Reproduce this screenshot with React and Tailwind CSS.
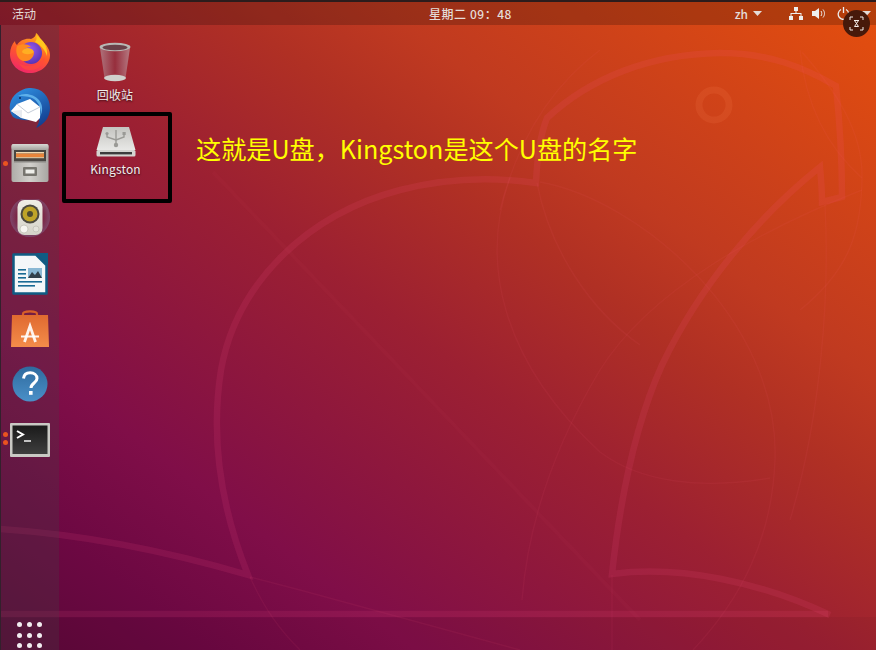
import React from 'react';

const dockSans = '"Noto Sans CJK SC", "Liberation Sans", sans-serif';

function Wallpaper() {
  return (
    <svg className="absolute inset-0 h-full w-full" viewBox="0 0 876 650" fill="none">
      <rect x="0" y="617" width="876" height="33" fill="#000" fillOpacity="0.04" />
      <path d="M213 172 L 640 620" stroke="#ff5088" strokeOpacity="0.03" strokeWidth="4" />
      <g stroke="#ff6a80" strokeOpacity="0.07" strokeWidth="1.4">
        <path d="M510 178 C 480 260 500 360 600 452 C 640 482 700 490 770 478" />
        <path d="M537 183 C 550 250 590 310 640 345" />
        <path d="M540 182 C 640 200 780 320 775 460 C 772 540 740 600 693 650" />
        <path d="M862 190 C 760 230 650 290 600 370 C 570 420 530 500 522 600" />
        <path d="M802 52 C 835 90 862 130 862 175 C 862 230 850 270 800 310" />
        <path d="M800 50 C 805 100 825 145 862 178" />
        <path d="M600 50 C 560 80 520 130 500 210" />
        <path d="M612 575 V 650" />
        <path d="M250 577 C 265 610 280 630 300 650" />
        <path d="M250 577 L 300 590 L 520 650" />
        <path d="M825 205 C 830 300 820 420 790 520" />
      </g>
      <g stroke="#ff5088" strokeOpacity="0.12" strokeWidth="6.5" strokeLinejoin="miter">
        <path d="M0 529 C 90 535 170 552 248 575 C 222 510 210 440 221 370 C 236 285 305 215 400 190 C 450 177 495 177 536 183 C 537 160 540 135 547 118 C 590 78 650 54 720 53 C 770 53 805 68 836 86 C 840 125 842 165 842 197 L 822 202 C 822 190 821 178 820 167 C 760 215 700 285 662 365 C 635 425 620 500 612 574 C 680 565 760 582 830 615" />
        <path d="M0 614 L 828 614" />
      </g>
      <circle cx="714" cy="105" r="15" stroke="#ff8a5a" strokeOpacity="0.13" strokeWidth="7" />
    </svg>
  );
}

function Firefox() {
  return (
    <svg width="42" height="42" viewBox="0 0 42 42">
      <defs>
        <linearGradient id="ffBody" x1="0.7" y1="0" x2="0.3" y2="1">
          <stop offset="0" stopColor="#ffb21a" />
          <stop offset="0.5" stopColor="#ff5a2a" />
          <stop offset="1" stopColor="#f0256a" />
        </linearGradient>
        <radialGradient id="ffGlobe" cx="0.45" cy="0.35" r="0.8">
          <stop offset="0" stopColor="#9a5cf0" />
          <stop offset="1" stopColor="#4a2aa8" />
        </radialGradient>
      </defs>
      <path d="M27 1 C 31 4 31 7 33 9 C 38 13 41 18 41 23 C 41 33 32 41 21 41 C 10 41 1 33 1 22 C 1 17 3 12 6 9 C 6 11 7 12 8 13 C 11 8 17 6 22 7 C 25 6 27 4 27 1 Z" fill="url(#ffBody)" />
      <circle cx="22" cy="21" r="11" fill="url(#ffGlobe)" />
      <path d="M8 14 C 13 11 20 12 22 15 C 18 15 15 17 15 19 C 17 22 22 21 25 20 C 25 26 20 30 14 29 C 8 27 6 20 8 14 Z" fill="#ff8a1e" />
      <path d="M27 3 C 35 8 39 15 38 24 C 36 18 32 13 26 10 C 28 8 28 5 27 3 Z" fill="#ffc81e" />
      <path d="M10 31 C 18 37 30 34 36 25 C 35 33 28 39 20 38 C 15 38 12 35 10 31 Z" fill="#ff4a3a" fillOpacity="0.7" />
      <path d="M13 20 C 15 23 22 23 25 20 C 24 17 21 16 18 16 C 15 17 13 18 13 20 Z" fill="#ffae22" />
    </svg>
  );
}

function Thunderbird() {
  return (
    <svg width="42" height="42" viewBox="0 0 42 42">
      <defs>
        <linearGradient id="tbBody" x1="0.2" y1="0" x2="0.8" y2="1">
          <stop offset="0" stopColor="#2f8fe0" />
          <stop offset="1" stopColor="#123a8c" />
        </linearGradient>
      </defs>
      <path d="M20 1 C 32 0 41 9 41 21 C 41 31 34 38 27 41 C 30 36 31 33 29 31 C 24 34 10 34 4 30 C 1 26 0 22 1 17 C 3 8 11 2 20 1 Z" fill="url(#tbBody)" />
      <path d="M9 9 C 15 5 25 7 30 13 C 34 18 34 24 31 30 C 33 22 30 16 25 12 C 20 9 14 9 9 9 Z" fill="#5eb0ea" />
      <path d="M2 24 L 8 17 L 21 12 L 31 20 L 31 31 L 27 35 L 12 31 Z" fill="#ffffff" />
      <path d="M8 17 L 19 26 L 31 20" fill="none" stroke="#c4ccd8" strokeWidth="1" />
      <path d="M2 24 L 13 23 L 13 31 Z" fill="#e8ebf0" />
      <circle cx="11" cy="11" r="1" fill="#0c2a60" />
    </svg>
  );
}

function Files() {
  return (
    <svg width="38" height="38" viewBox="0 0 38 38">
      <defs>
        <linearGradient id="cabinet" x1="0" y1="0" x2="1" y2="0">
          <stop offset="0" stopColor="#aeaca8" />
          <stop offset="0.5" stopColor="#d2d0cc" />
          <stop offset="1" stopColor="#a8a6a2" />
        </linearGradient>
        <linearGradient id="cabinetTop" x1="0" y1="0" x2="0" y2="1">
          <stop offset="0" stopColor="#d8d8d4" />
          <stop offset="1" stopColor="#a4a29e" />
        </linearGradient>
      </defs>
      <rect x="0.5" y="0" width="37" height="38" rx="2" fill="url(#cabinet)" />
      <rect x="0.5" y="0" width="37" height="6" rx="2" fill="url(#cabinetTop)" />
      <rect x="3" y="6" width="32" height="11" fill="#4a4642" />
      <rect x="5" y="8" width="28" height="1.6" fill="#f2d8ae" />
      <rect x="5" y="9.6" width="28" height="3.6" fill="#e8843a" />
      <rect x="5" y="13.2" width="28" height="1" fill="#f2d8ae" />
      <rect x="3" y="17" width="32" height="1.5" fill="#8a8884" />
      <rect x="12" y="23" width="14" height="9" rx="1" fill="#77756f" />
      <rect x="14.5" y="25.5" width="9" height="4" fill="#eeeeea" />
    </svg>
  );
}

function Rhythmbox() {
  return (
    <svg width="42" height="40" viewBox="0 0 42 40">
      <defs>
        <radialGradient id="halo" cx="0.5" cy="0.5" r="0.5">
          <stop offset="0.6" stopColor="#8ab0e0" stopOpacity="0" />
          <stop offset="1" stopColor="#8ab0e0" stopOpacity="0.25" />
        </radialGradient>
        <linearGradient id="speakerBody" x1="0" y1="0" x2="0" y2="1">
          <stop offset="0" stopColor="#f0eee6" />
          <stop offset="1" stopColor="#d4d2c8" />
        </linearGradient>
      </defs>
      <circle cx="21" cy="18" r="20" fill="url(#halo)" />
      <rect x="8.5" y="1" width="25" height="35" rx="7" fill="url(#speakerBody)" />
      <circle cx="21" cy="15" r="9.5" fill="#4c4a40" />
      <circle cx="21" cy="15" r="7.5" fill="#bfa428" />
      <circle cx="21" cy="15" r="3" fill="#4e4a30" />
      <circle cx="15" cy="30" r="4" fill="#f6f5f0" stroke="#bdbbb2" strokeWidth="0.7" />
      <circle cx="27" cy="30" r="3" fill="#e4e2da" stroke="#bdbbb2" strokeWidth="0.7" />
    </svg>
  );
}

function Writer() {
  return (
    <svg width="36" height="42" viewBox="0 0 36 42">
      <path d="M1.5 1.5 H 24 L 34.5 12 V 40.5 H 1.5 Z" fill="#f4f7f9" stroke="#0f5c84" strokeWidth="2.5" strokeLinejoin="round" />
      <path d="M24 0 L 36 0 L 36 12 Z" fill="#0f5c84" />
      <rect x="6" y="16" width="8" height="1.6" fill="#1a6a94" />
      <rect x="6" y="20" width="8" height="1.6" fill="#1a6a94" />
      <rect x="6" y="24" width="8" height="1.6" fill="#1a6a94" />
      <rect x="6" y="28" width="24" height="1.6" fill="#1a6a94" />
      <rect x="6" y="32" width="17" height="1.6" fill="#1a6a94" />
      <rect x="16" y="15" width="14" height="10" fill="#8ab8d4" />
      <path d="M16 25 L 20 19 L 23 22 L 26 18 L 30 25 Z" fill="#32404a" />
    </svg>
  );
}

function Software() {
  return (
    <svg width="38" height="38" viewBox="0 0 38 38">
      <defs>
        <linearGradient id="bag" x1="0" y1="0" x2="0" y2="1">
          <stop offset="0" stopColor="#e06a30" />
          <stop offset="1" stopColor="#f48c4a" />
        </linearGradient>
      </defs>
      <path d="M12 8 V 4 C 12 0.5 26 0.5 26 4 V 8" fill="none" stroke="#d85f28" strokeWidth="2.2" />
      <path d="M1 5 H 37 L 38 37 H 0 Z" fill="url(#bag)" />
      <path d="M13.5 32 L 19 16 L 24.5 32" fill="none" stroke="#fff" strokeWidth="2.8" strokeOpacity="0.9" />
      <path d="M10 26.5 H 28" stroke="#fff" strokeWidth="2" strokeOpacity="0.9" />
    </svg>
  );
}

function Help() {
  return (
    <svg width="36" height="36" viewBox="0 0 36 36">
      <defs>
        <linearGradient id="helpBlue" x1="0.5" y1="0" x2="0.5" y2="1">
          <stop offset="0" stopColor="#2f6a9e" />
          <stop offset="1" stopColor="#4a90c8" />
        </linearGradient>
      </defs>
      <circle cx="18" cy="18" r="17.5" fill="url(#helpBlue)" />
      <path d="M11.5 12.5 C 12 8 15 6.8 18.2 6.8 C 22 6.8 25 9 25 12.4 C 25 17 19 17 19 22" fill="none" stroke="#fff" strokeWidth="3" />
      <rect x="17" y="25" width="3.6" height="3.8" fill="#fff" />
    </svg>
  );
}

function Terminal() {
  return (
    <svg width="40" height="34" viewBox="0 0 40 34">
      <defs>
        <linearGradient id="termBg" x1="0" y1="0" x2="0" y2="1">
          <stop offset="0" stopColor="#1a1a1a" />
          <stop offset="1" stopColor="#3e3e3e" />
        </linearGradient>
      </defs>
      <rect x="0" y="0" width="40" height="34" rx="1" fill="#c9c9c4" />
      <rect x="2.5" y="2.5" width="35" height="28.5" fill="url(#termBg)" />
      <path d="M7 8 L 13 11.5 L 7 15" fill="none" stroke="#fff" strokeWidth="2" />
      <path d="M14 18 H 21" stroke="#e8e8e8" strokeWidth="1.6" />
    </svg>
  );
}

function Trash() {
  return (
    <svg width="36" height="42" viewBox="0 0 36 42">
      <defs>
        <linearGradient id="bin" x1="0" y1="0" x2="1" y2="0">
          <stop offset="0" stopColor="#b08088" />
          <stop offset="0.5" stopColor="#95303f" />
          <stop offset="1" stopColor="#b88890" />
        </linearGradient>
      </defs>
      <path d="M3 7 L 7.5 37 C 8.5 41 27.5 41 28.5 37 L 33 7 Z" fill="url(#bin)" fillOpacity="0.85" />
      <ellipse cx="18" cy="37" rx="11" ry="3.2" fill="#d0d0cc" />
      <ellipse cx="18" cy="6" rx="15.5" ry="4.2" fill="#b8b8b4" />
      <ellipse cx="18" cy="6.5" rx="12.5" ry="2.8" fill="#6a4048" />
    </svg>
  );
}

function UsbDrive() {
  return (
    <svg width="40" height="32" viewBox="0 0 40 32">
      <defs>
        <linearGradient id="driveTop" x1="0" y1="0" x2="0" y2="1">
          <stop offset="0" stopColor="#c4c4c0" />
          <stop offset="1" stopColor="#e8e8e6" />
        </linearGradient>
      </defs>
      <path d="M7 1 H 33 L 39.5 24 H 0.5 Z" fill="url(#driveTop)" />
      <rect x="0.5" y="24" width="39" height="6.5" rx="1.5" fill="#d4d4d0" />
      <rect x="4" y="26" width="32" height="2.4" fill="#3c3c3c" />
      <g fill="none" stroke="#9a9a96" strokeWidth="1.4">
        <path d="M20 4 V 18" />
        <path d="M11 8 V 11 L 20 14 L 28 11 V 8" />
      </g>
      <circle cx="20" cy="19" r="2.2" fill="#9a9a96" />
      <circle cx="11" cy="7.5" r="1.6" fill="#9a9a96" />
      <rect x="26.5" y="6" width="3.2" height="3" fill="#9a9a96" />
    </svg>
  );
}

function DesktopIcon({ label, width, gap, children }) {
  return (
    <div className="flex flex-col items-center" style={{ width, gap }}>
      {children}
      <span className="text-[12px] leading-[16px] tracking-[0.15px] text-[#f2eeee] [text-shadow:0_1px_2px_rgba(0,0,0,0.7)]">{label}</span>
    </div>
  );
}

const dockItems = [Firefox, Thunderbird, Files, Rhythmbox, Writer, Software, Help, Terminal];

export default function App() {
  return (
    <div
      className="relative flex h-[650px] w-[876px] flex-col overflow-hidden bg-[linear-gradient(37deg,#5a0838_0%,#6c0842_12%,#800e48_24%,#9c2032_48%,#b03024_62%,#c03a20_71%,#e04c10_96%,#e4500f_100%)]"
      style={{ fontFamily: dockSans }}
    >
      <Wallpaper />

      <header className="relative flex h-[25px] shrink-0 items-center border-t-2 border-[#2c1c1c] bg-black/20 text-[12px] text-[#e4dcd8]">
        <span className="ml-3">活动</span>
        <span className="absolute left-[429px] font-medium tracking-[0.55px]">星期二 09：48</span>
        <div className="ml-auto flex items-center pr-[3px]">
          <span className="font-medium">zh</span>
          <svg className="ml-[5px]" width="9" height="5" viewBox="0 0 9 5"><path d="M0 0 H 9 L 4.5 5 Z" fill="#e4dcd8" /></svg>
          <svg className="ml-[27px]" width="14" height="13" viewBox="0 0 14 13" fill="#eee">
            <rect x="5" y="0" width="4" height="4" />
            <rect x="0" y="9" width="4" height="4" />
            <rect x="10" y="9" width="4" height="4" />
            <path d="M6.5 4 H 7.5 V 6 H 12.5 V 9 H 11.5 V 7 H 2.5 V 9 H 1.5 V 6 H 6.5 Z" />
          </svg>
          <svg className="ml-[9px]" width="14" height="13" viewBox="0 0 14 13" fill="none" stroke="#eee">
            <path d="M0 4 H 3 L 7 1 V 12 L 3 9 H 0 Z" fill="#eee" stroke="none" />
            <path d="M9 4 C 10 5.5 10 7.5 9 9" />
            <path d="M11 2.5 C 13 5 13 8 11 10.5" />
          </svg>
          <svg className="ml-[11px]" width="13" height="13" viewBox="0 0 13 13" fill="none" stroke="#eee" strokeWidth="1.3">
            <path d="M4 2.5 A 5.3 5.3 0 1 0 9 2.5" />
            <path d="M6.5 0 V 6" />
          </svg>
          <svg className="ml-[12px] mr-[2px]" width="9" height="5" viewBox="0 0 9 5"><path d="M0 0 H 9 L 4.5 5 Z" fill="#e4dcd8" /></svg>
        </div>
      </header>

      <div className="relative flex min-h-0 flex-1">
        <aside className="flex w-[59px] shrink-0 flex-col border-l border-[#33202c] bg-[#454545]/25">
          {dockItems.map((Icon, i) => (
            <div key={i} className="flex h-[55.3px] shrink-0 items-center justify-center pr-px">
              <Icon />
            </div>
          ))}
          <div className="mt-auto mb-[2px] ml-[16px] grid grid-cols-[5px_5px_5px] gap-x-[5px] gap-y-[5.5px]">
            {Array.from({ length: 9 }).map((_, i) => (
              <span key={i} className="h-[5px] w-[5px] rounded-full bg-[#f2eef0]" />
            ))}
          </div>
        </aside>

        <main className="flex flex-col items-start pl-[3px] pt-[16px]">
          <div className="ml-px">
            <DesktopIcon label="回收站" width="104px" gap="4px">
              <Trash />
            </DesktopIcon>
          </div>
          <div className="mt-[9px] flex items-start">
            <div className="flex h-[91px] w-[110px] flex-col items-center rounded-[2px] border-[4px] border-black pt-[10px]">
              <div className="pr-[3px]">
                <DesktopIcon label="Kingston" width="98px" gap="3px">
                  <UsbDrive />
                </DesktopIcon>
              </div>
            </div>
            <p className="ml-[24px] mt-[18px] whitespace-nowrap text-[25.15px] leading-[36px] text-[#ffff00]">
              这就是U盘，Kingston是这个U盘的名字
            </p>
          </div>
        </main>

        {/* running indicators next to files and terminal */}
        <span className="absolute left-[3px] top-[136px] h-[5px] w-[5px] rounded-full bg-[#e95420]" />
        <span className="absolute left-[3px] top-[407px] h-[5px] w-[5px] rounded-full bg-[#e95420]" />
        <span className="absolute left-[3px] top-[415px] h-[5px] w-[5px] rounded-full bg-[#e95420]" />
      </div>

      {/* screenshot tool button floating over the top bar */}
      <div className="absolute left-[843px] top-[10px] flex h-[27px] w-[27px] items-center justify-center rounded-full bg-[#47190a]">
        <svg width="15" height="15" viewBox="0 0 15 15" fill="none" stroke="#f4eeea" strokeWidth="1">
          <path d="M1 4 V 1 H 4 M11 1 H 14 V 4 M14 11 V 14 H 11 M4 14 H 1 V 11" />
          <path d="M5 4.5 H 10 M5.5 10.5 H 9.5 M5.5 4.5 L 9.5 10.5 M9.5 4.5 L 5.5 10.5" />
        </svg>
      </div>
    </div>
  );
}
